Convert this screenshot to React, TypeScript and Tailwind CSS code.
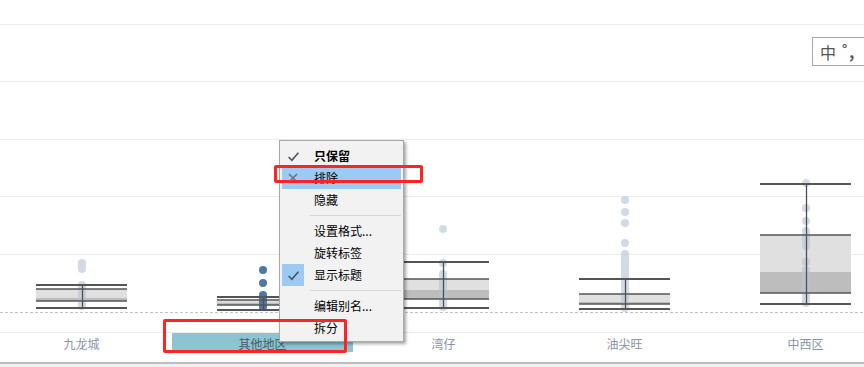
import React from 'react';

type Box = {
  cx: number;
  x0: number;
  x1: number;
  wt: number;
  bt: number;
  md: number;
  bb: number;
  wb: number;
  dots: [number, number][];
  selected?: boolean;
};

const boxes: Box[] = [
  { cx: 82, x0: 36, x1: 127, wt: 285, bt: 289, md: 298, bb: 301, wb: 308, dots: [[259, 273], [281, 311]] },
  { cx: 263, x0: 217, x1: 309, wt: 297, bt: 300, md: 302.5, bb: 305, wb: 310, dots: [[266, 274], [279, 287], [291, 313]], selected: true },
  { cx: 443, x0: 397, x1: 489, wt: 262, bt: 279, md: 290, bb: 299, wb: 308, dots: [[225, 233], [259, 268], [270, 311]] },
  { cx: 625, x0: 579, x1: 670, wt: 279, bt: 294, md: 302, bb: 304, wb: 309, dots: [[196, 204], [208, 216], [219, 227], [239, 247], [250, 313]] },
  { cx: 806, x0: 760, x1: 851, wt: 184, bt: 235, md: 272, bb: 293, wb: 304, dots: [[179, 187], [204, 212], [217, 225], [227, 251], [258, 266], [266, 307]] },
];

const labels = ['九龙城', '其他地区', '湾仔', '油尖旺', '中西区'];

const gridLines = [24, 81, 139, 196, 254];

function pill(cx: number, range: [number, number], color: string, key: string) {
  const [a, b] = range;
  const out: React.ReactNode[] = [];
  for (let y = a + 4; y <= b - 4 + 0.01; y += 3) {
    out.push(<circle key={`${key}-${y}`} cx={cx} cy={y} r={4} fill={color} />);
  }
  return out;
}

const BoxPlotChart: React.FC = () => (
  <svg width={864} height={332} className="block">
    {gridLines.map((y) => (
      <line key={y} x1={0} x2={864} y1={y + 0.5} y2={y + 0.5} stroke="#ececec" strokeWidth={1} />
    ))}
    <line x1={0} x2={864} y1={312.5} y2={312.5} stroke="#c4c4c4" strokeWidth={1} strokeDasharray="3 2" />
    {boxes.map((b, i) => (
      <g key={i}>
        <rect x={b.x0} y={b.bt} width={b.x1 - b.x0} height={b.md - b.bt} fill="#e0e0e0" />
        <rect x={b.x0} y={b.md} width={b.x1 - b.x0} height={b.bb - b.md} fill="#bdbdbd" />
        {b.selected ? (
          <g>{b.dots.flatMap((d, j) => pill(b.cx, d, '#4e76a6', `${i}-${j}`))}</g>
        ) : (
          <g opacity={0.62}>{b.dots.flatMap((d, j) => pill(b.cx, d, '#b7c6d5', `${i}-${j}`))}</g>
        )}
        <line x1={b.cx + 0.5} x2={b.cx + 0.5} y1={b.wt} y2={b.wb} stroke="#4f4f4f" strokeWidth={1.3} />
        <line x1={b.x0} x2={b.x1} y1={b.wt} y2={b.wt} stroke="#555" strokeWidth={2.2} />
        <line x1={b.x0} x2={b.x1} y1={b.bt} y2={b.bt} stroke="#555" strokeWidth={1.5} />
        <line x1={b.x0} x2={b.x1} y1={b.bb} y2={b.bb} stroke="#555" strokeWidth={1.5} />
        <line x1={b.x0} x2={b.x1} y1={b.wb} y2={b.wb} stroke="#555" strokeWidth={2.2} />
      </g>
    ))}
  </svg>
);

const CheckIcon = () => (
  <svg width={13} height={13} viewBox="0 0 12 12">
    <path d="M1.5 6.5 L4.5 9.5 L10.5 2.5" fill="none" stroke="#4b5563" strokeWidth={1.5} />
  </svg>
);

const CrossIcon = () => (
  <svg width={12} height={12} viewBox="0 0 12 12">
    <path d="M2 2 L10 10 M10 2 L2 10" fill="none" stroke="#6b7280" strokeWidth={1.6} />
  </svg>
);

type MenuRow =
  | { sep: true }
  | { sep?: false; text: string; icon?: 'check' | 'cross'; bold?: boolean; hover?: boolean; boxed?: boolean };

const menuRows: MenuRow[] = [
  { text: '只保留', icon: 'check', bold: true },
  { text: '排除', icon: 'cross', hover: true },
  { text: '隐藏' },
  { sep: true },
  { text: '设置格式...' },
  { text: '旋转标签' },
  { text: '显示标题', icon: 'check', boxed: true },
  { sep: true },
  { text: '编辑别名...' },
  { text: '拆分' },
];

const ContextMenu: React.FC = () => (
  <div className="absolute left-[279px] top-[140px] w-[125px] border border-[#a9a9a9] bg-[#f2f2f2] px-[2px] pt-[4px] pb-[2px] shadow-[2px_2px_3px_rgba(0,0,0,0.35)] text-[12px] text-black">
    {menuRows.map((r, i) =>
      r.sep ? (
        <div key={i} className="h-[9px] flex items-center pl-[28px]">
          <div className="h-px w-full bg-[#d7d7d7]" />
        </div>
      ) : (
        <div key={i} className={`h-[22px] flex items-center ${r.hover ? 'bg-[#9ccaf2]' : ''}`}>
          <div className={`w-[22px] h-[22px] flex items-center justify-center ${r.boxed ? 'bg-[#9ccaf2]' : ''}`}>
            {r.icon === 'check' && <CheckIcon />}
            {r.icon === 'cross' && <CrossIcon />}
          </div>
          <span className={`ml-[10px] leading-[14px] ${r.bold ? 'font-bold' : ''}`}>{r.text}</span>
        </div>
      )
    )}
  </div>
);

export default function App() {
  return (
    <div className="relative w-[864px] h-[367px] overflow-hidden bg-white font-['Noto_Sans_CJK_SC','Microsoft_YaHei',sans-serif]">
      <BoxPlotChart />
      <div className="h-[30px] border-t border-[#ececec] overflow-hidden">
        <div className="flex ml-[-9px]">
          {labels.map((l, i) => (
            <div
              key={l}
              className={`w-[181px] shrink-0 h-[19px] flex items-end justify-center pb-[1px] text-[12px] leading-[14px] ${
                i === 1 ? 'bg-[#8cc4d2] text-[#4a5868]' : 'text-[#8a93a3]'
              }`}
            >
              {l}
            </div>
          ))}
        </div>
      </div>
      <div className="h-[5px] border-t-2 border-[#bdbdbd] bg-[#f0f0f0]" />

      <div className="absolute left-[812px] top-[37px] h-[29px] w-[70px] border border-[#a8a8a8] bg-white flex items-center pl-[7px] gap-[6px] text-[#555]">
        <span className="text-[16px] leading-none">中</span>
        <span className="text-[13px] leading-none font-bold -mt-[6px]">°</span>
        <span className="text-[16px] leading-none font-bold -ml-[6px]">，</span>
      </div>

      <ContextMenu />

      <div className="absolute left-[274px] top-[165px] w-[149px] h-[18px] border-[3px] border-[#ff2424] rounded-[2px]" />
      <div className="absolute left-[163px] top-[319px] w-[184px] h-[34px] border-[3px] border-[#ff2424] rounded-[2px]" />
    </div>
  );
}
